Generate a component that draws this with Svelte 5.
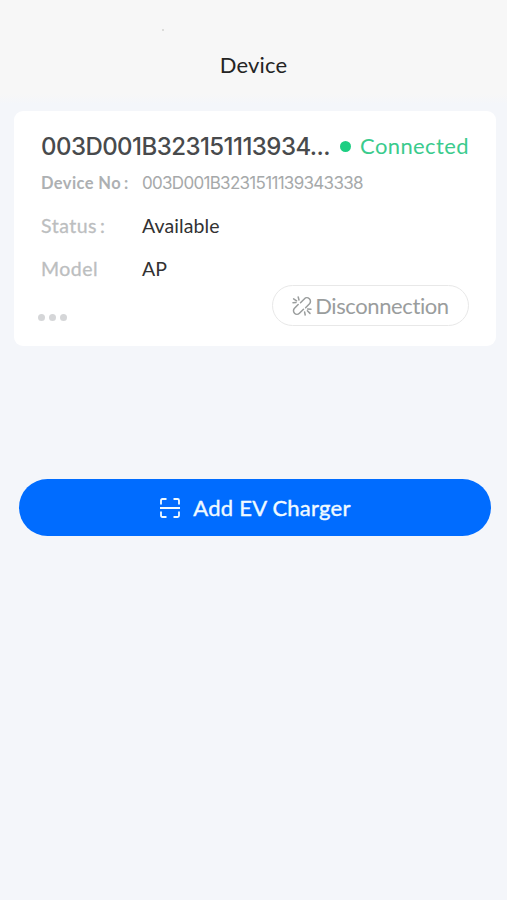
<script>
  const device = {
    name: "003D001B323151113934...",
    number: "003D001B3231511139343338",
    status: "Available",
    model: "AP",
  };
</script>

<main class="screen">
  <header class="header">
    <span class="speck"></span>
    <h1>Device</h1>
  </header>

  <section class="card">
    <div class="title-row">
      <span class="name">{device.name}</span>
      <span class="dot"></span>
      <span class="state">Connected</span>
    </div>
    <dl class="rows">
      <div class="row">
        <dt class="number-label">Device No<span class="colon">:</span></dt>
        <dd class="number">{device.number}</dd>
      </div>
      <div class="row">
        <dt>Status<span class="colon">:</span></dt>
        <dd>{device.status}</dd>
      </div>
      <div class="row">
        <dt>Model</dt>
        <dd>{device.model}</dd>
      </div>
    </dl>
    <div class="footer">
      <button class="more" aria-label="More"><i></i><i></i><i></i></button>
      <button class="disconnect">
        <svg width="20" height="20" viewBox="0 0 20 20" aria-hidden="true">
          <path d="M8.500 6.800l3.800-3.900a3.500 3.500 0 0 1 5.200 4.900L13.600 11.700M6.200 8.500L2.500 12.300a3.400 3.400 0 0 0 4.900 4.900L11.500 13.200" />
          <path d="M6.200 1l.8 3M1.600 2.800l3 2M1 6.800l3-.2M12.600 16l.6 3M15.400 14.800l2.600 2.600M15.600 13l3.400.2" />
        </svg>
        <span>Disconnection</span>
      </button>
    </div>
  </section>

  <button class="add">
    <svg width="22" height="22" viewBox="0 0 22 22" aria-hidden="true">
      <path d="M2 7.500V3.500Q2 2 3.500 2H7.500M14.500 2h4Q20 2 20 3.500V7.500M20 14.500v4Q20 20 18.500 20H14.500M7.500 20H3.500Q2 20 2 18.500V14.500M1 11h20" />
    </svg>
    <span>Add EV Charger</span>
  </button>
</main>

<style>
  :global(body) {
    background: #f4f6fa;
  }
  .screen {
    box-sizing: border-box;
    min-height: 900px;
    font-family: Lato, "Liberation Sans", sans-serif;
    font-variant-ligatures: none;
    background: #f4f6fa;
  }
  .header {
    position: relative;
    box-sizing: border-box;
    height: 111px;
    padding-top: 50px;
    background: linear-gradient(#f7f7f7 94px, #f4f6fa 104px);
  }
  .speck {
    position: absolute;
    left: 162px;
    top: 29px;
    width: 2px;
    height: 2px;
    background: #dcdcda;
  }
  h1 {
    margin: 0;
    font-size: 22px;
    line-height: 30px;
    font-weight: 400;
    letter-spacing: 0.2px;
    text-align: center;
    color: #242424;
  }
  .card {
    box-sizing: border-box;
    width: 482px;
    height: 235px;
    margin-left: 14px;
    padding: 20px 27px;
    border-radius: 9px;
    background: #fff;
  }
  .title-row {
    display: flex;
    align-items: center;
    height: 30px;
    white-space: nowrap;
  }
  .name {
    width: 299px;
    font-family: Inter, sans-serif;
    font-size: 24px;
    font-weight: 500;
    letter-spacing: -0.55px;
    color: #484a4c;
  }
  .dot {
    flex: none;
    width: 11px;
    height: 11px;
    border-radius: 50%;
    background: #1dce82;
  }
  .state {
    margin-left: 9px;
    padding-bottom: 2px;
    font-size: 22px;
    letter-spacing: 0.4px;
    color: #3acb8d;
  }
  .rows {
    margin: 0;
  }
  .row {
    display: flex;
    align-items: center;
    height: 43px;
    font-size: 19.5px;
    white-space: nowrap;
  }
  dt {
    width: 101px;
    letter-spacing: 0.5px;
    color: #bcbebf;
    -webkit-text-stroke: 0.3px currentColor;
  }
  .colon {
    margin-left: 3px;
  }
  .number-label {
    font-weight: 700;
    font-size: 16.5px;
    letter-spacing: 0.4px;
    color: #adb0b2;
    -webkit-text-stroke: 0;
  }
  dd {
    margin: 0;
    letter-spacing: 0.1px;
    color: #323232;
  }
  .number {
    font-family: Inter, sans-serif;
    font-size: 17px;
    letter-spacing: -0.7px;
    color: #a6a9aa;
  }
  .footer {
    display: flex;
    justify-content: space-between;
    margin-top: -5px;
  }
  button {
    padding: 0;
    border: 0;
    background: none;
    font-family: inherit;
    font-variant-ligatures: none;
  }
  .more {
    display: flex;
    gap: 4px;
    margin: 29px 0 0 -3px;
    align-items: flex-start;
  }
  .more i {
    width: 7px;
    height: 7px;
    border-radius: 50%;
    background: #d5d6d8;
  }
  .disconnect {
    box-sizing: border-box;
    display: flex;
    align-items: center;
    justify-content: center;
    gap: 3px;
    width: 197px;
    height: 41px;
    border: 1.5px solid #e8e8e8;
    border-radius: 21px;
    font-size: 22px;
    letter-spacing: -0.4px;
    color: #9a9d9d;
  }
  .disconnect span {
    padding-bottom: 1px;
  }
  svg {
    flex: none;
    fill: none;
    stroke: currentColor;
    stroke-width: 1.5;
    stroke-linecap: round;
  }
  .add {
    display: flex;
    align-items: center;
    justify-content: center;
    gap: 12px;
    width: 472px;
    height: 57px;
    margin: 133px 0 0 19px;
    border-radius: 29px;
    background: #006cff;
    font-size: 22px;
    letter-spacing: 0.25px;
    color: #f0faff;
  }
  .add span {
    -webkit-text-stroke: 0.4px currentColor;
  }
  .add svg {
    stroke-width: 1.8;
    stroke-linecap: butt;
  }
</style>
